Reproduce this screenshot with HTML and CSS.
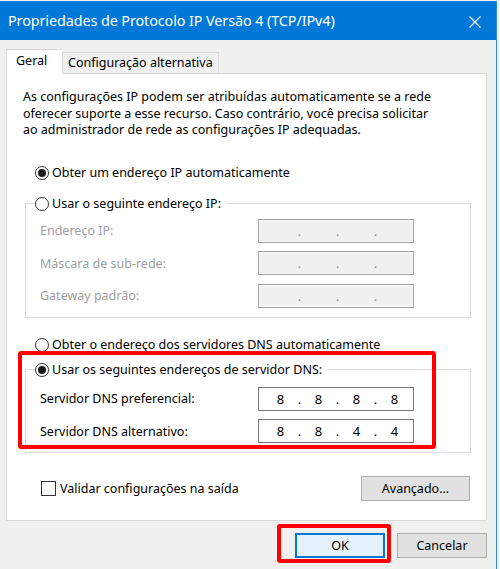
FILE: index.html
```html
<!DOCTYPE html>
<html lang="pt-BR">
<head>
  <meta charset="UTF-8" />
  <title>Propriedades de Protocolo IP Versão 4 (TCP/IPv4)</title>
  <link rel="stylesheet" href="styles.css">
</head>
<body>
  <div class="window">
    <div class="titlebar">
      <span class="title">Propriedades de Protocolo IP Versão 4 (TCP/IPv4)</span>
      <span class="close">
        <svg width="12" height="12" viewBox="0 0 12 12"><path d="M0.5 0.5 L11.5 11.5 M11.5 0.5 L0.5 11.5" stroke="#fff" stroke-width="1.1" fill="none"/></svg>
      </span>
    </div>

    <div class="content">
      <div class="tabs">
        <div class="tab active">Geral</div>
        <div class="tab">Configuração alternativa</div>
      </div>

      <div class="panel">
        <p class="intro">
          As configurações IP podem ser atribuídas automaticamente se a rede<br>
          oferecer suporte a esse recurso. Caso contrário, você precisa solicitar<br>
          ao administrador de rede as configurações IP adequadas.
        </p>

        <div class="radio checked first">
          <span class="circle"></span>Obter um endereço IP automaticamente
        </div>

        <fieldset class="group group-ip">
          <legend class="radio"><span class="circle"></span>Usar o seguinte endereço IP:</legend>
          <div class="fields">
            <span class="field-label disabled">Endereço IP:</span>
            <div class="ip disabled"><span></span><span>.</span><span></span><span>.</span><span></span><span>.</span><span></span></div>
            <span class="field-label disabled">Máscara de sub-rede:</span>
            <div class="ip disabled"><span></span><span>.</span><span></span><span>.</span><span></span><span>.</span><span></span></div>
            <span class="field-label disabled">Gateway padrão:</span>
            <div class="ip disabled"><span></span><span>.</span><span></span><span>.</span><span></span><span>.</span><span></span></div>
          </div>
        </fieldset>

        <div class="radio second">
          <span class="circle"></span>Obter o endereço dos servidores DNS automaticamente
        </div>

        <fieldset class="group group-dns">
          <legend class="radio checked"><span class="circle"></span>Usar os seguintes endereços de servidor DNS:</legend>
          <div class="fields">
            <span class="field-label">Servidor DNS preferencial:</span>
            <div class="ip"><span>8</span><span>.</span><span>8</span><span>.</span><span>8</span><span>.</span><span>8</span></div>
            <span class="field-label">Servidor DNS alternativo:</span>
            <div class="ip"><span>8</span><span>.</span><span>8</span><span>.</span><span>4</span><span>.</span><span>4</span></div>
          </div>
        </fieldset>

        <div class="panel-footer">
          <div class="checkbox"><span class="box"></span>Validar configurações na saída</div>
          <button class="btn">Avançado...</button>
        </div>
      </div>

      <div class="buttons">
        <button class="btn default">OK</button>
        <button class="btn">Cancelar</button>
      </div>
    </div>

    <!-- red annotation marks -->
    <div class="mark mark-dns"></div>
    <div class="mark mark-ok"></div>
  </div>
</body>
</html>
```

FILE: styles.css
```css
* {
  box-sizing: border-box;
  margin: 0;
  padding: 0;
}
body {
  background: #f2f2f2;
  font-family: "Noto Sans", "Liberation Sans", sans-serif;
  font-size: 12px;
  color: #000;
  width: 500px;
  height: 569px;
  overflow: hidden;
}

/* Window */
.window {
  position: relative;
  width: 497px;
  height: 568px;
  margin-top: 1px;
  background: #f0f0f0;
  border-right: 1px solid #2a86d8;
}
.titlebar {
  height: 39px;
  background: #0078d7;
  color: #fff;
  display: flex;
  align-items: center;
  justify-content: space-between;
  padding: 0 15px 0 8px;
}
.title {
  font-size: 14.4px;
  letter-spacing: -0.1px;
}
.close {
  display: flex;
  margin-top: 2px;
}

/* Tabs */
.content {
  padding: 9px 9px 0 6px;
}
.tabs {
  display: flex;
  align-items: flex-end;
  height: 24px;
}
.tab {
  height: 21px;
  padding: 0 5px;
  border: 1px solid #d9d9d9;
  border-bottom: none;
  background: #f0f0f0;
  line-height: 20px;
  font-size: 12.5px;
}
.tab.active {
  height: 25px;
  width: 56px;
  padding: 0 9px;
  background: #fff;
  border-right: none;
  margin-bottom: -1px;
  position: relative;
  z-index: 1;
  line-height: 22px;
}
.panel {
  width: 481px;
  height: 448px;
  background: #fff;
  border: 1px solid #d9d9d9;
  padding: 15px 16px 0 16px;
}
.intro {
  font-size: 12.5px;
  line-height: 16.5px;
}

/* Radios and checkbox */
.radio {
  display: flex;
  align-items: center;
  height: 16px;
  font-size: 12.5px;
  white-space: nowrap;
}
.radio .circle {
  width: 14px;
  height: 14px;
  border: 1px solid #333;
  border-radius: 50%;
  margin-right: 3px;
  display: flex;
  align-items: center;
  justify-content: center;
  background: #fff;
}
.radio.checked .circle::after {
  content: "";
  width: 8px;
  height: 8px;
  border-radius: 50%;
  background: #1a1a1a;
}
.radio.first {
  margin: 26px 0 0 12px;
}
.radio.second {
  margin: 19px 0 0 12px;
}
.checkbox {
  display: flex;
  align-items: center;
  font-size: 12.5px;
}
.checkbox .box {
  width: 15px;
  height: 15px;
  border: 1px solid #333;
  margin-right: 4px;
  background: #fff;
}

/* Group boxes */
.group {
  width: 446px;
  margin: 15px 0 0 2px;
  border: 1px solid #dcdcdc;
  padding: 7px 0 9px 14px;
}
.group-dns {
  margin-top: 9px;
  padding-top: 9px;
}
.group legend {
  margin-left: -5px;
  padding-right: 5px;
}
.fields {
  display: grid;
  grid-template-columns: 218px 156px;
  row-gap: 8.5px;
  align-items: center;
  font-size: 12.5px;
}
.field-label.disabled {
  color: #a0a0a0;
}
.ip {
  height: 24px;
  border: 1px solid #7a7a7a;
  background: #fff;
  display: flex;
  padding-left: 12px;
  font-size: 13px;
  line-height: 22px;
}
.ip span {
  width: 19px;
  text-align: center;
}
.ip.disabled {
  background: #f0f0f0;
  border-color: #a0a0a0;
  box-shadow: inset 0 0 0 1px #fafafa;
  color: #8a96a8;
}

/* Footer */
.panel-footer {
  display: flex;
  justify-content: space-between;
  align-items: center;
  margin: 23px 0 0 18px;
}
.btn {
  font-family: inherit;
  font-size: 12.5px;
  height: 25px;
  width: 90px;
  background: #e1e1e1;
  border: 1px solid #adadad;
  color: #000;
}
.panel-footer .btn {
  width: 109px;
}
.buttons {
  display: flex;
  justify-content: flex-end;
  gap: 12px;
  margin-top: 12px;
}
.btn.default {
  border: 2px solid #0078d7;
  background: #e5f1fb;
}

/* Red annotation marks */
.mark {
  position: absolute;
  border: 4px solid #ff0000;
  border-radius: 3px;
}
.mark-dns {
  left: 18px;
  top: 350px;
  width: 418px;
  height: 98px;
}
.mark-ok {
  left: 277px;
  top: 523px;
  width: 114px;
  height: 39px;
}
```
